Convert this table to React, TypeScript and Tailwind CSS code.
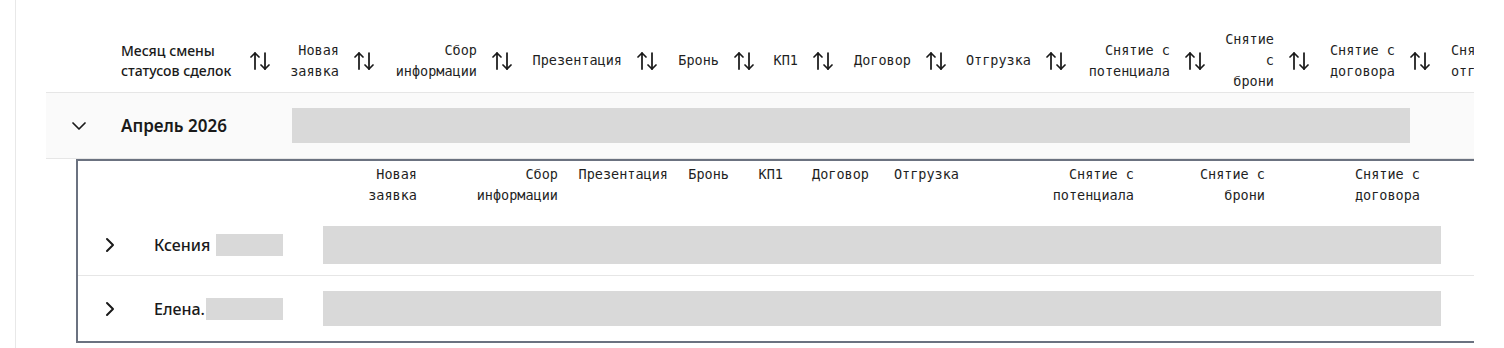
import {ArrowUpDown, ChevronDown, ChevronRight} from 'lucide-react'

const headCols = [
  {label: 'Новая заявка', cell: 'w-[104px]', text: 'w-[6.3ch]'},
  {label: 'Сбор информации', cell: 'w-[138px]', text: 'w-[10.3ch]'},
  {label: 'Презентация', cell: 'w-[145px]', text: ''},
  {label: 'Бронь', cell: 'w-[97px]', text: ''},
  {label: 'КП1', cell: 'w-[79px]', text: ''},
  {label: 'Договор', cell: 'w-[113px]', text: ''},
  {label: 'Отгрузка', cell: 'w-[120px]', text: ''},
  {label: 'Снятие с потенциала', cell: 'w-[139px]', text: 'w-[10.3ch]'},
  {label: 'Снятие с брони', cell: 'w-[104px]', text: 'w-[6.3ch]'},
  {label: 'Снятие с договора', cell: 'w-[121px]', text: 'w-[8.3ch]'},
  {label: 'Снятие с отгрузки', cell: 'w-[121px]', text: 'w-[8.3ch]'}
]

const subCols = [
  {label: 'Новая заявка', cell: 'w-[339px]', text: 'w-[6.3ch]'},
  {label: 'Сбор информации', cell: 'w-[141px]', text: 'w-[10.3ch]'},
  {label: 'Презентация', cell: 'w-[110px]', text: ''},
  {label: 'Бронь', cell: 'w-[61px]', text: ''},
  {label: 'КП1', cell: 'w-[54px]', text: ''},
  {label: 'Договор', cell: 'w-[86px]', text: ''},
  {label: 'Отгрузка', cell: 'w-[90px]', text: ''},
  {label: 'Снятие с потенциала', cell: 'w-[175px]', text: 'w-[10.3ch]'},
  {label: 'Снятие с брони', cell: 'w-[131px]', text: 'w-[8.3ch]'},
  {label: 'Снятие с договора', cell: 'w-[155px]', text: 'w-[8.3ch]'}
]

const people = [
  {name: 'Ксения', mask: 'w-[67px]', row: 'h-[61px] border-b border-[#e6e6e6]', bar: 'h-[38px]'},
  {name: 'Елена.', mask: 'w-[77px]', row: 'h-[65px]', bar: 'h-[35px]'}
]

const mono = "font-['DejaVu_Sans_Mono',monospace] text-[13.5px] leading-[21px] text-[#1f1f1f]"

export default function App() {
  return (
    <div className="h-[348px] w-[1504px] overflow-hidden bg-white font-['Noto_Sans',sans-serif]">
      <div className="ml-[15px] h-full border-l border-[#e8e8e8] pl-[30px]">
        <div className="w-[1428px] overflow-hidden">
          {/* header */}
          <div className="mt-[29px] flex h-[64px] items-center border-b border-[#e6e6e6]">
            <div className="flex shrink-0 items-center pl-[75px]">
              <div className="w-[114px] text-[14px] font-medium leading-[20px] text-[#1a1a1a]">
                Месяц смены статусов сделок
              </div>
              <ArrowUpDown size={24} strokeWidth={1.75} className="ml-[13px] shrink-0 text-[#1a1a1a]" />
            </div>
            {headCols.map(col => (
              <div key={col.label} className={`flex shrink-0 items-center justify-end ${col.cell}`}>
                <div className={`text-right ${mono} ${col.text}`}>{col.label}</div>
                <ArrowUpDown size={24} strokeWidth={1.75} className="ml-[13px] shrink-0 text-[#1a1a1a]" />
              </div>
            ))}
          </div>

          {/* month group */}
          <div className="flex h-[66px] items-center border-b border-[#e6e6e6] bg-[#fafafa] pl-[21px]">
            <ChevronDown size={24} strokeWidth={1.75} className="shrink-0 text-[#1a1a1a]" />
            <div className="ml-[30px] w-[171px] shrink-0 pt-[1px] text-[17px] font-semibold text-[#1a1a1a]">Апрель 2026</div>
            <div className="h-[35px] w-[1118px] shrink-0 bg-[#d9d9d9]" />
          </div>

          {/* nested table */}
          <div className="ml-[30px] w-[1470px] border-2 border-[#6b7280] bg-white">
            <div className="flex h-[54px] items-start pt-[3px]">
              {subCols.map(col => (
                <div key={col.label} className={`flex shrink-0 justify-end ${col.cell}`}>
                  <div className={`text-right ${mono} ${col.text}`}>{col.label}</div>
                </div>
              ))}
            </div>
            {people.map(p => (
              <div key={p.name} className={`flex items-center pl-[20px] ${p.row}`}>
                <ChevronRight size={24} strokeWidth={2} className="shrink-0 text-[#1a1a1a]" />
                <div className="ml-[32px] flex w-[129px] shrink-0 items-center">
                  <span className="shrink-0 whitespace-nowrap text-[16px] font-medium text-[#1a1a1a]">{p.name}</span>
                  <div className={`ml-auto h-[22px] min-w-0 bg-[#d9d9d9] ${p.mask}`} />
                </div>
                <div className={`ml-[40px] w-[1118px] shrink-0 bg-[#d9d9d9] ${p.bar}`} />
              </div>
            ))}
          </div>
        </div>
      </div>
    </div>
  )
}
